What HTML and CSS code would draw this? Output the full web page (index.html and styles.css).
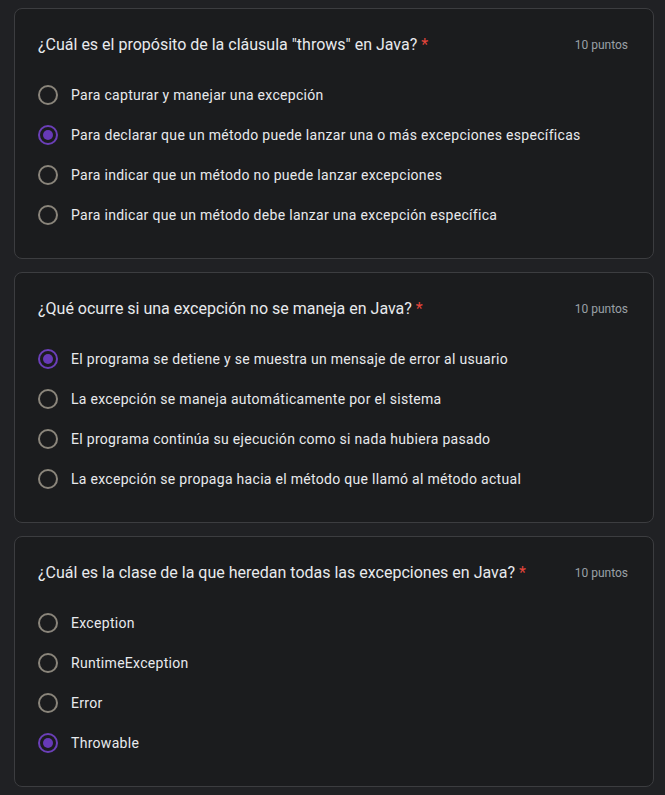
FILE: index.html
```html
<!DOCTYPE html>
<html lang="es">
<head>
<meta charset="utf-8">
<link rel="stylesheet" href="styles.css">
</head>
<body>
<div class="list">
  <section class="card">
    <div class="head">
      <div class="title">¿Cuál es el propósito de la cláusula "throws" en Java? <span class="req">*</span></div>
      <div class="pts">10 puntos</div>
    </div>
    <div class="opts">
      <div class="opt"><span class="radio"></span><span>Para capturar y manejar una excepción</span></div>
      <div class="opt"><span class="radio on"></span><span>Para declarar que un método puede lanzar una o más excepciones específicas</span></div>
      <div class="opt"><span class="radio"></span><span>Para indicar que un método no puede lanzar excepciones</span></div>
      <div class="opt"><span class="radio"></span><span>Para indicar que un método debe lanzar una excepción específica</span></div>
    </div>
  </section>
  <section class="card">
    <div class="head">
      <div class="title">¿Qué ocurre si una excepción no se maneja en Java? <span class="req">*</span></div>
      <div class="pts">10 puntos</div>
    </div>
    <div class="opts">
      <div class="opt"><span class="radio on"></span><span>El programa se detiene y se muestra un mensaje de error al usuario</span></div>
      <div class="opt"><span class="radio"></span><span>La excepción se maneja automáticamente por el sistema</span></div>
      <div class="opt"><span class="radio"></span><span>El programa continúa su ejecución como si nada hubiera pasado</span></div>
      <div class="opt"><span class="radio"></span><span>La excepción se propaga hacia el método que llamó al método actual</span></div>
    </div>
  </section>
  <section class="card">
    <div class="head">
      <div class="title">¿Cuál es la clase de la que heredan todas las excepciones en Java? <span class="req">*</span></div>
      <div class="pts">10 puntos</div>
    </div>
    <div class="opts">
      <div class="opt"><span class="radio"></span><span>Exception</span></div>
      <div class="opt"><span class="radio"></span><span>RuntimeException</span></div>
      <div class="opt"><span class="radio"></span><span>Error</span></div>
      <div class="opt"><span class="radio on"></span><span>Throwable</span></div>
    </div>
  </section>
</div>
</body>
</html>
```
FILE: styles.css
```css
html, body {
  margin: 0;
  padding: 0;
  background: #202124;
}
body {
  font-family: Roboto, "Liberation Sans", sans-serif;
  color: #e8eaed;
}
.list {
  display: flex;
  flex-direction: column;
  gap: 13px;
  padding: 8px 11px 0 14px;
}
.card {
  background: #1b1c1e;
  border: 1px solid #3c3d40;
  border-radius: 8px;
  padding: 24px 25px 23px 23px;
}
.head {
  display: flex;
  align-items: center;
  justify-content: space-between;
  height: 24px;
}
.title {
  font-size: 16px;
  line-height: 24px;
  color: #e8eaed;
}
.req {
  color: #e5453b;
}
.pts {
  font-size: 12px;
  color: #9aa0a6;
}
.opts {
  margin-top: 18px;
  display: flex;
  flex-direction: column;
}
.opt {
  height: 40px;
  display: flex;
  align-items: center;
  gap: 13px;
  font-size: 14px;
  letter-spacing: 0.3px;
  color: #e8eaed;
}
.radio {
  width: 20px;
  height: 20px;
  box-sizing: border-box;
  border: 2px solid #8a857b;
  border-radius: 50%;
  display: flex;
  align-items: center;
  justify-content: center;
  flex: none;
}
.radio.on {
  border-color: #6b3fb8;
}
.radio.on::after {
  content: "";
  width: 10px;
  height: 10px;
  border-radius: 50%;
  background: #673ab7;
}
```
